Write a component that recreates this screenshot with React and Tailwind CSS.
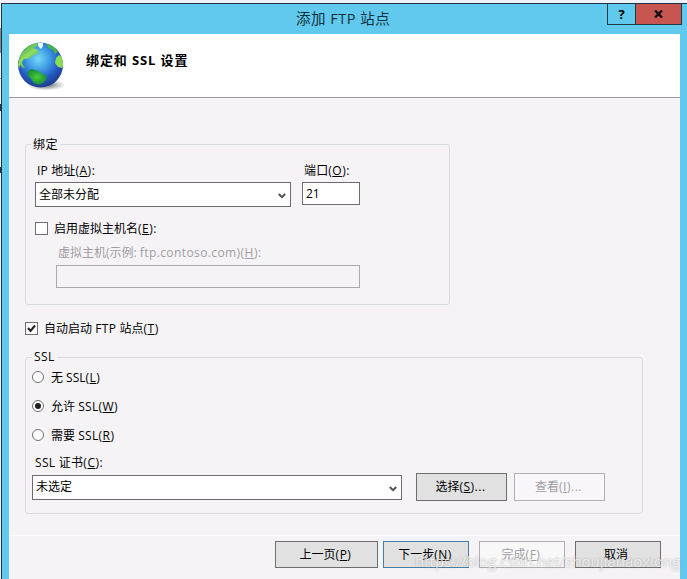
function Key({ children }) {
  return (
    <span className="tracking-[0.5px]">
      (<span className="underline underline-offset-1">{children}</span>)
    </span>
  );
}

function Chevron() {
  return (
    <svg width="8" height="6" viewBox="0 0 8 6" className="mt-0.5 shrink-0">
      <path d="M0.8 1L4 4.2L7.2 1" fill="none" stroke="#505050" strokeWidth="1.9" />
    </svg>
  );
}

function Globe() {
  return (
    <svg width="50" height="52" viewBox="0 0 50 52" className="shrink-0">
      <defs>
        <radialGradient id="sea" cx="0.45" cy="0.36" r="0.62">
          <stop offset="0" stopColor="#74dcf8" />
          <stop offset="0.4" stopColor="#3f9de4" />
          <stop offset="0.75" stopColor="#2458c4" />
          <stop offset="1" stopColor="#20408f" />
        </radialGradient>
        <linearGradient id="land" x1="0" y1="0" x2="0.6" y2="1">
          <stop offset="0" stopColor="#2c8f35" />
          <stop offset="0.55" stopColor="#8fdc62" />
          <stop offset="1" stopColor="#3fb53a" />
        </linearGradient>
        <radialGradient id="south">
          <stop offset="0" stopColor="#4ecb35" />
          <stop offset="1" stopColor="#178f3c" />
        </radialGradient>
        <radialGradient id="shade">
          <stop offset="0.3" stopColor="#555b66" stopOpacity="0.65" />
          <stop offset="1" stopColor="#555b66" stopOpacity="0" />
        </radialGradient>
        <clipPath id="ball">
          <circle cx="23.5" cy="24" r="22.5" />
        </clipPath>
      </defs>
      <ellipse cx="29" cy="44" rx="19" ry="5.5" fill="url(#shade)" />
      <circle cx="23.5" cy="24" r="22.5" fill="url(#sea)" />
      <g clipPath="url(#ball)">
        <path d="M1 24L3 15L8 7L15 3L21 2L20 5L16 7L19 8L22 10L20 13L16 14L13 17L10 18L7 18L5 21L6 24L8 27L6 27L3 24L2 28Z" fill="url(#land)" />
        <path d="M10 31L14 28L18 29L22 30L25 33L30 35L29 39L26 42L22 44L17 42L14 38L11 35Z" fill="url(#south)" />
        <path d="M29 3L34 4L38 7L41 11L38 13L36 9L32 7Z" fill="#44b644" />
        <path d="M39 17L42 14L45 16L47 22L45 27L41 26L38 22Z" fill="#8bdc55" />
        <path d="M21 2L26 2L26 5L24 8L21 5Z" fill="#eefaf5" />
      </g>
    </svg>
  );
}

function Radio({ checked, className, children }) {
  return (
    <div className={`flex h-4 items-center ${className}`}>
      <span className="mr-[7px] -mt-0.5 flex size-3 items-center justify-center rounded-full border border-[#707070] bg-white">
        {checked && <span className="size-1.5 rounded-full bg-[#202020]" />}
      </span>
      <span>{children}</span>
    </div>
  );
}

export default function App() {
  return (
    <div className="relative flex h-[579px] w-[687px] overflow-hidden bg-[#f0f1fa] font-['Open_Sans','Noto_Sans_CJK_SC',sans-serif] text-xs leading-4 whitespace-nowrap text-black">
      {/* Sliver of the window behind */}
      <div className="w-px shrink-0 pt-7">
        <div className="h-[25px] bg-[#8b8b90]" />
        <div className="mt-[25px] h-px bg-[#a0a0a5]" />
        <div className="mt-[25px] h-[7px] bg-[#333333]" />
        <div className="mt-[56px] h-[6px] bg-[#333333]" />
      </div>

      <div className="mt-[3px] flex min-w-0 flex-1 flex-col border-t border-l border-[#1c3342] bg-[#62c9ee] px-[7px]">
        {/* Title bar */}
        <header className="flex h-[30px] shrink-0 items-start">
          <h1 className="ml-[287px] pt-[5px] text-[14.5px] leading-5 tracking-[0.5px] text-[#12303c]">添加 FTP 站点</h1>
          <div className="-mr-[2px] ml-auto flex h-[21px] border border-t-0 border-[#1e3844] text-[13px] font-bold">
            <button className="flex w-[28px] items-center justify-center border-r border-[#1e3844]">?</button>
            <button className="flex w-[45px] items-center justify-center bg-[#c75650]">
              <svg width="9" height="8" viewBox="0 0 9 8">
                <path d="M1 0.5L8 7.5M8 0.5L1 7.5" stroke="#151010" strokeWidth="2.4" />
              </svg>
            </button>
          </div>
        </header>

        <main className="flex min-h-0 flex-1 flex-col bg-[#f6f3f7]">
          <div className="flex h-16 shrink-0 border-b border-[#9d979f] bg-white pt-[7px] pl-2">
            <Globe />
            <h2 className="mt-[11px] ml-[19px] text-[13px] font-bold tracking-[0.9px]">绑定和 SSL 设置</h2>
          </div>

          {/* Site binding */}
          <fieldset className="mt-[38px] ml-4 h-[169px] w-[425px] shrink-0 rounded-[3px] border border-[#d8dce1] pl-[9px]">
            <legend className="-ml-[4px] h-4 px-[2px] pt-px tracking-[0.5px]">绑定</legend>
            <div className="mt-[11px] flex h-4 pl-[2px]">
              <span className="w-[267px] tracking-[0.15px]">IP 地址<Key>A</Key>:</span>
              <span className="tracking-[0.15px]">端口<Key>O</Key>:</span>
            </div>
            <div className="mt-[3px] flex items-start">
              <div className="flex h-[25px] w-[256px] items-center justify-between border border-[#6d6a70] bg-white pr-1 pl-[3px]">
                全部未分配
                <Chevron />
              </div>
              <div className="ml-[11px] h-[23px] w-[58px] border border-[#6d6a70] bg-white pt-[3px] pl-[3px]">21</div>
            </div>
            <div className="mt-[14px] flex h-4 items-center">
              <span className="mr-1.5 -mt-px size-[13px] border border-[#706d73] bg-white" />
              <span>启用虚拟主机名<Key>E</Key>:</span>
            </div>
            <div className="mt-2 ml-[23px] h-4 text-[#a09da2]">
              虚拟主机(示例: <span className="tracking-[0.4px]">ftp.contoso.com)</span>
              <Key>H</Key>:
            </div>
            <div className="mt-1 ml-[21px] h-[23px] w-[304px] border border-[#aca9ae]" />
          </fieldset>

          <div className="mt-4 ml-4 flex h-4 shrink-0 items-center">
            <span className="mr-1.5 -mt-px flex size-[13px] items-center justify-center border border-[#706d73] bg-white">
              <svg width="9" height="9" viewBox="0 0 9 9">
                <path d="M1 4L3.5 7L8 1.5" fill="none" stroke="#202020" strokeWidth="2" />
              </svg>
            </span>
            <span>自动启动 <span className="tracking-[0.4px]">FTP</span> 站点<Key>T</Key></span>
          </div>

          {/* SSL settings */}
          <fieldset className="mt-3 ml-4 h-[165px] w-[618px] shrink-0 rounded-[3px] border border-[#d8dce1] pl-1.5">
            <legend className="h-4 px-[2px] tracking-[0.4px]">SSL</legend>
            <Radio className="mt-[5px]">无 SSL<Key>L</Key></Radio>
            <Radio className="mt-[13px]" checked>允许 <span className="tracking-[0.3px]">SSL</span><Key>W</Key></Radio>
            <Radio className="mt-[13px]">需要 <span className="tracking-[0.3px]">SSL</span><Key>R</Key></Radio>
            <div className="mt-[11px] h-4 pl-[3px] tracking-[0.3px]">SSL 证书<Key>C</Key>:</div>
            <div className="mt-[2px] flex">
              <div className="mt-[2px] flex h-[25px] w-[370px] items-center justify-between border border-[#6d6a70] bg-white pr-1 pl-[3px]">
                <span className="-mt-px">未选定</span>
                <Chevron />
              </div>
              <button className="ml-[14px] h-7 w-[91px] border border-[#706d70] bg-[#e1e1e1] pr-0.5">选择<Key>S</Key><span className="tracking-[0.5px]">...</span></button>
              <button className="ml-[7px] h-7 w-[91px] border border-[#b2afb3] bg-[#f8f6f8] pr-0.5 text-[#a09da2]">查看<Key>I</Key><span className="tracking-[0.5px]">...</span></button>
            </div>
          </fieldset>

          <footer className="mt-auto flex h-[44px] shrink-0 border-t border-white pt-[5px] pl-[266px]">
            <button className="h-[27px] w-[103px] border border-[#706d70] bg-[#e1e1e1] pr-0.5">上一页<Key>P</Key></button>
            <button className="ml-[5px] h-[27px] w-[86px] border border-[#467da5] bg-[#e1e1e1] pr-0.5">下一步<Key>N</Key></button>
            <button className="ml-2.5 h-[27px] w-[86px] border border-[#b2afb3] bg-[#f9f8f9] pr-0.5 text-[#a09da2]">完成<Key>F</Key></button>
            <button className="ml-2.5 h-[27px] w-[86px] border border-[#706d70] bg-[#e1e1e1] pr-1">取消</button>
          </footer>
        </main>
      </div>

      <div className="absolute top-[551px] left-[415px] text-[15px] leading-5 text-white/70 [text-shadow:0_0_2px_rgba(120,120,120,0.6)]">
        https://blog.csdn.net/zhoujianaoxiong
      </div>
    </div>
  );
}
